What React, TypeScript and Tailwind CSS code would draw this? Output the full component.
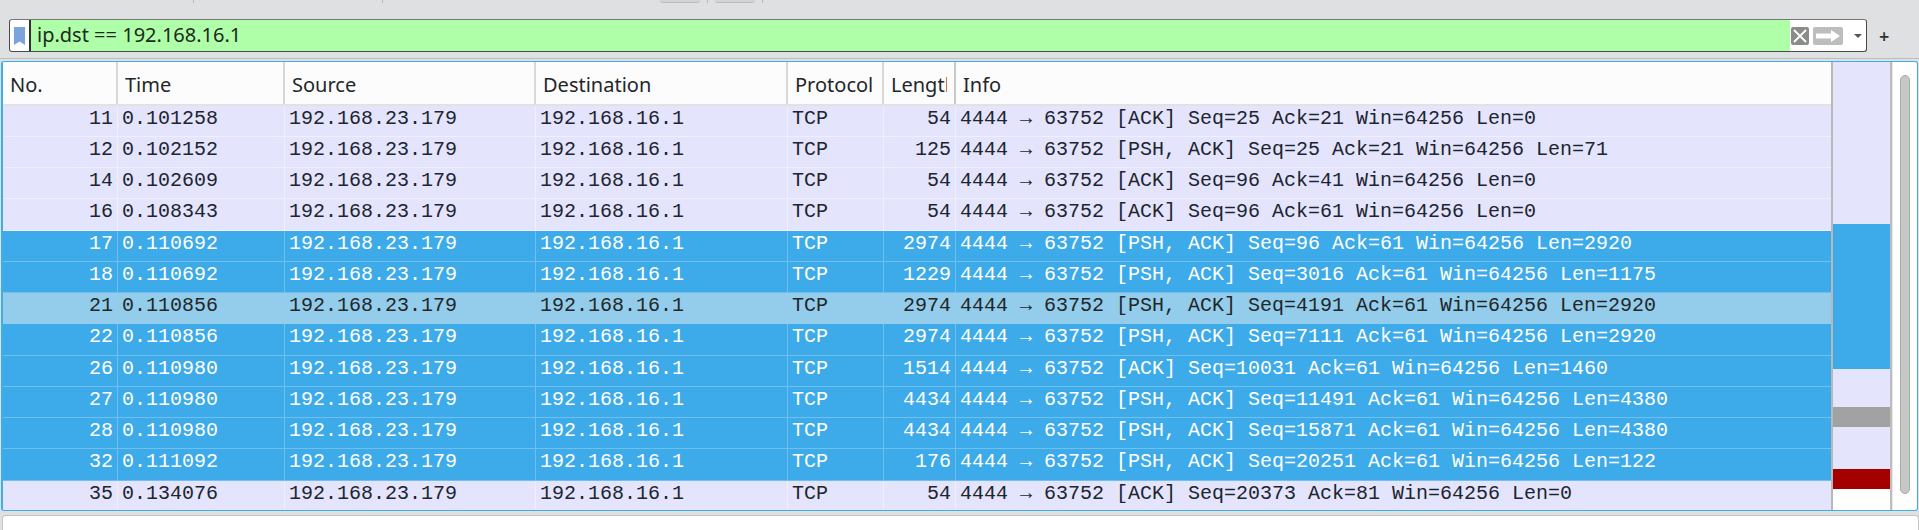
interface Packet {
  no: number;
  time: string;
  length: number;
  info: string;
  kind: "plain" | "selected" | "current";
}

const packets: Packet[] = [
  { no: 11, time: "0.101258", length: 54, info: "[ACK] Seq=25 Ack=21 Win=64256 Len=0", kind: "plain" },
  { no: 12, time: "0.102152", length: 125, info: "[PSH, ACK] Seq=25 Ack=21 Win=64256 Len=71", kind: "plain" },
  { no: 14, time: "0.102609", length: 54, info: "[ACK] Seq=96 Ack=41 Win=64256 Len=0", kind: "plain" },
  { no: 16, time: "0.108343", length: 54, info: "[ACK] Seq=96 Ack=61 Win=64256 Len=0", kind: "plain" },
  { no: 17, time: "0.110692", length: 2974, info: "[PSH, ACK] Seq=96 Ack=61 Win=64256 Len=2920", kind: "selected" },
  { no: 18, time: "0.110692", length: 1229, info: "[PSH, ACK] Seq=3016 Ack=61 Win=64256 Len=1175", kind: "selected" },
  { no: 21, time: "0.110856", length: 2974, info: "[PSH, ACK] Seq=4191 Ack=61 Win=64256 Len=2920", kind: "current" },
  { no: 22, time: "0.110856", length: 2974, info: "[PSH, ACK] Seq=7111 Ack=61 Win=64256 Len=2920", kind: "selected" },
  { no: 26, time: "0.110980", length: 1514, info: "[ACK] Seq=10031 Ack=61 Win=64256 Len=1460", kind: "selected" },
  { no: 27, time: "0.110980", length: 4434, info: "[PSH, ACK] Seq=11491 Ack=61 Win=64256 Len=4380", kind: "selected" },
  { no: 28, time: "0.110980", length: 4434, info: "[PSH, ACK] Seq=15871 Ack=61 Win=64256 Len=4380", kind: "selected" },
  { no: 32, time: "0.111092", length: 176, info: "[PSH, ACK] Seq=20251 Ack=61 Win=64256 Len=122", kind: "selected" },
  { no: 35, time: "0.134076", length: 54, info: "[ACK] Seq=20373 Ack=81 Win=64256 Len=0", kind: "plain" },
];

const columns = "grid grid-cols-[115px_167px_251px_252px_96px_72px_1fr]";

const rowStyles = {
  plain: "bg-[#e4e4fc] text-[#1c2530] border-[#f0f0fd]",
  selected: "bg-[#3daae9] text-white border-[#6fc0ef]",
  current: "bg-[#93cdeb] text-[#232629] border-[#93cdeb]",
};

function HeaderCell({ label, className = "border-r-2 border-[#d8d8d8]" }: { label: string; className?: string }) {
  return (
    <div className={`h-full pl-[7px] pr-[7px] pt-[10px] ${className}`}>
      <div className="overflow-hidden whitespace-nowrap">{label}</div>
    </div>
  );
}

function PacketRow({ packet }: { packet: Packet }) {
  const cell = "border-r border-inherit h-full overflow-hidden whitespace-nowrap";
  return (
    <div className={`${columns} h-[31.25px] shrink-0 border-b ${rowStyles[packet.kind]}`}>
      <div className={`${cell} pr-1 text-right`}>{packet.no}</div>
      <div className={`${cell} pl-1`}>{packet.time}</div>
      <div className={`${cell} pl-1`}>192.168.23.179</div>
      <div className={`${cell} pl-1`}>192.168.16.1</div>
      <div className={`${cell} pl-1`}>TCP</div>
      <div className={`${cell} pr-1 text-right`}>{packet.length}</div>
      <div className="h-full overflow-hidden whitespace-nowrap pl-1">4444 → 63752 {packet.info}</div>
    </div>
  );
}

export default function App() {
  return (
    <div className="flex h-[530px] w-[1919px] flex-col overflow-hidden bg-[#dfe0e2] font-['Noto_Sans',sans-serif]">
      {/* leftovers of the toolbar above */}
      <div className="flex h-[3px] shrink-0">
        <div className="ml-[193px] w-px bg-[#b8b8b8]" />
        <div className="ml-[188px] w-px bg-[#b8b8b8]" />
        <div className="ml-[277px] w-[40px] rounded-b border-b border-[#bbbbbb] bg-[#d2d3d5]" />
        <div className="ml-[7px] w-px bg-[#b8b8b8]" />
        <div className="ml-[7px] w-[40px] rounded-b border-b border-[#bbbbbb] bg-[#d2d3d5]" />
        <div className="ml-[7px] w-px bg-[#b8b8b8]" />
      </div>

      {/* display filter */}
      <div className="mt-[16px] flex h-[33px] shrink-0 items-center">
        <div className="ml-[9px] flex h-full w-[1858px] items-stretch overflow-hidden rounded-[3px] border border-[#4b4b4b] border-t-[#777777] bg-white">
          <div className="flex w-[21px] items-center justify-center border-r-2 border-[#333333]">
            <svg width="11" height="18" viewBox="0 0 11 18">
              <path d="M0 0h11v18l-5.500-3.500-5.500 3.500z" fill="#7ba4dc" />
            </svg>
          </div>
          <div className="flex-1 bg-[#afffa9] pl-[6px] text-[20px] leading-[30px] text-[#1d2a20]">ip.dst == 192.168.16.1</div>
          <div className="flex w-[76px] items-center pl-px">
            <div className="h-[18px] w-[18px] rounded-[2px] bg-[#8b8d89]">
              <svg width="18" height="18" viewBox="0 0 18 18">
                <path d="M3 3l12 12M15 3L3 15" stroke="#ffffff" strokeWidth="1.8" />
              </svg>
            </div>
            <div className="ml-1 flex h-[18px] w-[30px] items-center justify-center rounded-[2px] bg-[#bdbdbd]">
              <svg width="26" height="14" viewBox="0 0 26 14">
                <path d="M1 4.500h15V1l9 6-9 6V9.500H1z" fill="#ffffff" />
              </svg>
            </div>
            <div className="ml-[11px] h-0 w-0 border-x-[4px] border-t-[4px] border-x-transparent border-t-[#555555]" />
          </div>
        </div>
        <div className="ml-[12px] text-[18px] font-semibold leading-none text-[#333333]">+</div>
      </div>

      <div className="mt-[6px] h-px shrink-0 bg-[#bcbcbc]" />

      {/* packet list */}
      <div className="ml-px mt-[2px] flex h-[450px] w-[1917px] shrink-0 overflow-hidden rounded-[3px] border border-l-2 border-[#3daee9] bg-white">
        <div className="flex w-[1830px] shrink-0 flex-col overflow-hidden border-r-2 border-[#b8b8b8] font-['Liberation_Mono',monospace] text-[20px] leading-[26px]">
          <div className={`${columns} h-[43.7px] shrink-0 border-b-2 border-[#e2e2e2] bg-[#fcfcfc] font-['Noto_Sans',sans-serif] text-[20px] leading-[26px] text-[#232629]`}>
            <HeaderCell label="No." />
            <HeaderCell label="Time" />
            <HeaderCell label="Source" />
            <HeaderCell label="Destination" />
            <HeaderCell label="Protocol" />
            <HeaderCell label="Length" className="border-r-2 border-[#c8c8c8]" />
            <HeaderCell label="Info" className="" />
          </div>
          {packets.map((packet) => (
            <PacketRow key={packet.no} packet={packet} />
          ))}
        </div>

        {/* colour overview */}
        <div className="flex w-[57px] shrink-0 flex-col bg-white">
          <div className="h-[162px] bg-[#e4e4fc]" />
          <div className="h-[145px] bg-[#3daae9]" />
          <div className="h-[38px] bg-[#e4e4fc]" />
          <div className="h-[20px] bg-[#a2a2a2]" />
          <div className="h-[42px] bg-[#e4e4fc]" />
          <div className="h-[20px] bg-[#a40000]" />
        </div>

        {/* scrollbar */}
        <div className="flex-1 border-l-2 border-[#bdbdbd]">
          <div className="h-full border-l border-[#e8e8e8] pl-[7px] pt-[13px]">
            <div className="h-[419px] w-[10px] rounded-full border border-[#a9aba9] bg-[#c6c8c6]" />
          </div>
        </div>
      </div>

      {/* packet details pane */}
      <div className="ml-[2px] mt-[4px] flex-1 rounded-t-[4px] border border-b-0 border-[#c4c4c4] bg-white" />
    </div>
  );
}
